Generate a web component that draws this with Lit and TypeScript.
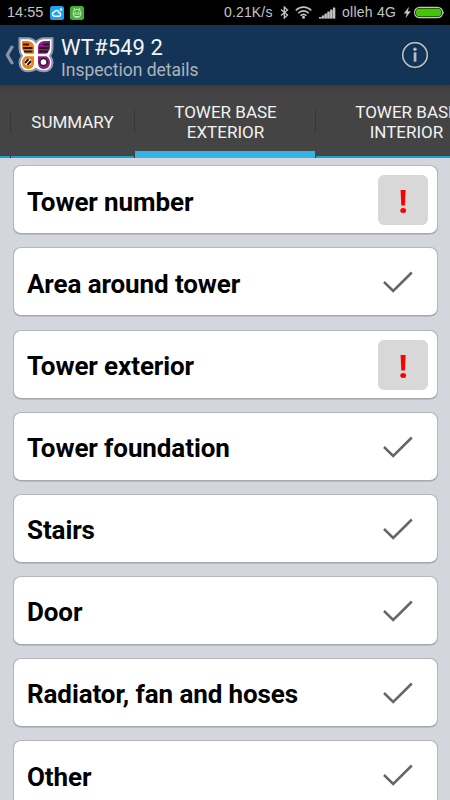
import { LitElement, html, css, svg } from "lit";
import { customElement, property } from "lit/decorators.js";

interface Item {
  label: string;
  alert?: boolean;
}

const ITEMS: Item[] = [
  { label: "Tower number", alert: true },
  { label: "Area around tower" },
  { label: "Tower exterior", alert: true },
  { label: "Tower foundation" },
  { label: "Stairs" },
  { label: "Door" },
  { label: "Radiator, fan and hoses" },
  { label: "Other" },
];

@customElement("status-bar")
class StatusBar extends LitElement {
  static styles = css`
    :host {
      display: flex;
      align-items: center;
      height: 25px;
      box-sizing: border-box;
      padding: 0 5px 0 7px;
      background: #000;
      color: #c4c4c4;
      font: 14px/25px "Liberation Sans", Arial, sans-serif;
      white-space: nowrap;
    }
    svg { display: block; flex: none; }
    .time { width: 43px; font-size: 14.5px; }
    .app { margin-right: 6px; }
    .rate { margin-left: auto; width: 56px; letter-spacing: 0.15px; }
    .bt { margin-right: 6px; }
    .wifi { margin-right: 7px; }
    .signal { margin-right: 6px; }
    .carrier { width: 61px; letter-spacing: 0.25px; }
  `;
  render() {
    return html`
      <span class="time">14:55</span>
      <svg class="app" width="14" height="14" viewBox="0 0 14 14">
        <rect width="14" height="14" rx="2.5" fill="#1ba4f2" />
        <path d="M4.3 10.2a2.2 2.2 0 0 1-.1-4.3 2.7 2.7 0 0 1 5 .9 1.75 1.75 0 0 1 .2 3.4Z" fill="none" stroke="#fff" stroke-width="1.5" />
        <circle cx="11" cy="3.5" r="1.3" fill="#e8f7ff" />
      </svg>
      <svg width="14" height="14" viewBox="0 0 14 14">
        <rect width="14" height="14" rx="2.5" fill="#45ae38" />
        <path d="M4 2l1.2 2M10 2L8.8 4M3.3 6.5a3.7 3.2 0 0 1 7.4 0v2a3.7 3 0 0 1-7.4 0ZM3.3 8h7.4M5 10.5h4" fill="none" stroke="#d0f3c8" stroke-width=".9" />
        <circle cx="5.5" cy="6.2" r=".6" fill="#e4ffe0" /><circle cx="8.5" cy="6.2" r=".6" fill="#e4ffe0" />
      </svg>
      <span class="rate">0.21K/s</span>
      <svg class="bt" width="9" height="13" viewBox="0 0 9 13">
        <path d="M1 3.5l6.5 5.500-3.200 3V1l3.200 3L1 9.500" fill="none" stroke="#c4c4c4" stroke-width="1.3" />
      </svg>
      <svg class="wifi" width="17" height="13" viewBox="0 0 17 13">
        <g fill="none" stroke="#c4c4c4" stroke-width="1.6">
          <path d="M.8 4.500a10.500 10.500 0 0 1 15.400 0" />
          <path d="M3.3 7.200a7 7 0 0 1 10.400 0" />
          <path d="M5.600 9.700a3.900 3.900 0 0 1 5.800 0" />
        </g>
        <circle cx="8.5" cy="11.3" r="1.5" fill="#c4c4c4" />
      </svg>
      <svg class="signal" width="17" height="12" viewBox="0 0 17 12">
        <path d="M0 11.500L16.500 1v10.500Z" fill="#777" />
        ${[1.5, 3, 5, 7, 9, 11].map(
          (h, i) => svg`<rect x=${i * 2.8} y=${11.5 - h} width="2" height=${h} fill="#c4c4c4"/>`
        )}
      </svg>
      <span class="carrier">olleh 4G</span>
      <svg width="42" height="13" viewBox="0 0 42 13">
        <path d="M6 .8L.8 7.500h2.900L2.500 12.300l5.300-7H4.900Z" fill="#c4c4c4" />
        <rect x="11.600" y="1.300" width="28" height="10.400" rx="5" fill="none" stroke="#c4c4c4" stroke-width="1.200" />
        <rect x="12.900" y="2.600" width="25.400" height="7.800" rx="3.600" fill="#43c608" />
        <path d="M40.300 4.500q1.200 2 0 4Z" fill="#c4c4c4" />
      </svg>
    `;
  }
}

@customElement("title-bar")
class TitleBar extends LitElement {
  static styles = css`
    :host {
      display: flex;
      align-items: center;
      height: 60px;
      box-sizing: border-box;
      padding: 0 21px 0 5px;
      background: #133457;
      font-family: Roboto, "Liberation Sans", sans-serif;
      white-space: nowrap;
    }
    svg { display: block; flex: none; }
    .back { margin-right: 4px; }
    .text { margin-left: 7px; flex: 1; }
    .title { font-size: 22px; line-height: 25px; color: #f4f5f6; margin-top: 5px; letter-spacing: 0.1px; }
    .sub { font-size: 17.5px; line-height: 21px; color: #adb4bb; }
  `;
  render() {
    return html`
      <svg class="back" width="9" height="20" viewBox="0 0 9 20">
        <path d="M7.600 1L2.300 10l5.300 9" fill="none" stroke="#8595a5" stroke-width="3.200" />
      </svg>
      <svg width="36" height="36" viewBox="0 0 36 36">
        <path d="M1.500 1.300h9q5 .5 7.500 4 2.500-3.500 7.500-4h9v9.500q0 5-2.500 8 2.500 3 2.500 7-1 8.500-8.500 8.500-5 0-8-2.500-3 2.500-8 2.500-7.500 0-8.500-8.500 0-4 2.500-7-2.500-3-2.500-8Z" fill="#fff" stroke="#8e9baa" stroke-width="2" />
        <path d="M4 4h6q6 .8 6 6v6.800H7.500Q4 14 4 9.500Z" fill="#f07d0c" />
        <path d="M32 4h-6q-6 .8-6 6v6.800h8.500Q32 14 32 9.500Z" fill="#8c1b87" />
        <path d="M7.500 19.300H16V26q-.5 6-5.800 6-6-.5-6.200-6.500 0-4 3.500-6.200Z" fill="#f07d0c" />
        <path d="M28.500 19.300H20V26q.5 6 5.800 6 6-.5 6.200-6.500 0-4-3.500-6.200Z" fill="#8c1b87" />
        <path d="M5 7.500h6M5 11h9.500M6 14.500h8.500M31 7.500h-6M31 11h-9.500M30 14.500h-8.500" stroke="#261a16" stroke-width="1.900" />
        <circle cx="10" cy="25" r="3.500" fill="#fff" />
        <path d="M7 26l3.500-4M9.500 28l3.500-4" stroke="#17110d" stroke-width="2" />
        <circle cx="25.500" cy="25" r="3.500" fill="#fff" stroke="#201419" stroke-width="1.300" />
      </svg>
      <div class="text">
        <div class="title">WT#549 2</div>
        <div class="sub">Inspection details</div>
      </div>
      <svg width="28" height="28" viewBox="0 0 28 28">
        <circle cx="14" cy="14" r="12.600" fill="none" stroke="#10243a" stroke-width="2.800" />
        <circle cx="14" cy="14" r="12.300" fill="none" stroke="#b3bdcb" stroke-width="1.700" />
        <circle cx="14" cy="8.300" r="1.700" fill="#b3bdcb" />
        <rect x="12.700" y="11.300" width="2.700" height="9.400" fill="#b3bdcb" />
      </svg>
    `;
  }
}

@customElement("tab-strip")
class TabStrip extends LitElement {
  static styles = css`
    :host {
      display: flex;
      height: 73px;
      box-sizing: border-box;
      padding-left: 10px;
      overflow: hidden;
      background: linear-gradient(#403b35, #444 7px);
      box-shadow: inset 0 -2px #1ca0d2;
      color: #f2f2f2;
      font: 17px/20px Roboto, "Liberation Sans", sans-serif;
      text-align: center;
    }
    .divider {
      flex: none;
      width: 1px;
      background:
        linear-gradient(#373737, #373737) 0 25px / 1px 23px no-repeat,
        linear-gradient(#4a2a20, #4a2a20) 0 100% / 1px 2px no-repeat;
    }
    .tab {
      flex: none;
      width: 180px;
      box-sizing: border-box;
      display: flex;
      align-items: center;
      justify-content: center;
      padding: 1px 0 0 1px;
    }
    .first { width: 123px; padding-left: 0; }
    .active { box-shadow: inset 0 -7px #34b3e6; }
  `;
  render() {
    return html`
      <div class="divider"></div>
      <div class="tab first">SUMMARY</div>
      <div class="divider"></div>
      <div class="tab active">TOWER BASE<br />EXTERIOR</div>
      <div class="divider"></div>
      <div class="tab">TOWER BASE<br />INTERIOR</div>
    `;
  }
}

@customElement("check-card")
class CheckCard extends LitElement {
  @property() label = "";
  @property({ type: Boolean }) alert = false;
  static styles = css`
    :host {
      display: flex;
      align-items: center;
      justify-content: space-between;
      flex: none;
      height: 69px;
      box-sizing: border-box;
      padding: 0 8.5px 0 13.5px;
      border: 1px solid #b4b7bf;
      border-bottom-color: #a5a8af;
      border-radius: 8px;
      background: #fff;
      box-shadow: 0 0.5px #a0a3a9;
      font: bold 26px/30px Roboto, "Liberation Sans", sans-serif;
      letter-spacing: -0.1px;
      color: #000;
      white-space: nowrap;
    }
    .label { padding-top: 4px; }
    svg { display: block; margin-top: 1px; }
    .tick { margin-right: 15px; }
  `;
  render() {
    return html`
      <span class="label">${this.label}</span>
      ${this.alert
        ? html`<svg width="50" height="50" viewBox="0 0 50 50">
            <rect width="50" height="50" rx="6" fill="#d8d8d8" />
            <path d="M22.600 15h5l-.7 15.500h-3.600Z" fill="#ff0000" />
            <ellipse cx="25.200" cy="35.400" rx="2.900" ry="2.500" fill="#ff0000" />
          </svg>`
        : html`<svg class="tick" width="30" height="22" viewBox="0 0 30 22">
            <path d="M1 11l9.200 9L28.800 1.500" fill="none" stroke="#666" stroke-width="2.500" />
          </svg>`}
    `;
  }
}

@customElement("app-root")
class AppRoot extends LitElement {
  static styles = css`
    :host {
      display: flex;
      flex-direction: column;
      width: 450px;
      height: 800px;
      overflow: hidden;
      background: #d3d6dc;
    }
    status-bar, title-bar, tab-strip { flex: none; }
    .list {
      flex: 1;
      min-height: 0;
      overflow: hidden;
      display: flex;
      flex-direction: column;
      gap: 13.1px;
      padding: 7.400px 12.500px 0;
    }
  `;
  render() {
    return html`
      <status-bar></status-bar>
      <title-bar></title-bar>
      <tab-strip></tab-strip>
      <div class="list">
        ${ITEMS.map((i) => html`<check-card .label=${i.label} .alert=${!!i.alert}></check-card>`)}
      </div>
    `;
  }
}
